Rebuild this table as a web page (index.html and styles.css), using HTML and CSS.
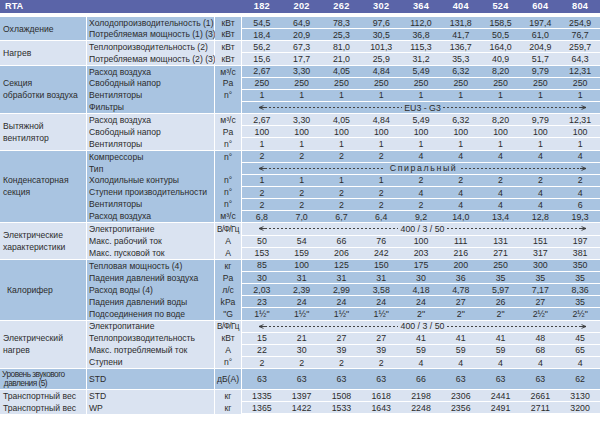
FILE: index.html
```html
<!DOCTYPE html>
<html lang="ru">
<head>
<meta charset="utf-8">
<title>RTA</title>
<link rel="stylesheet" href="styles.css">
</head>
<body>
<div class="sheet">
  <div class="head">
    <div class="ttl">RTA</div>
    <div class="hnums"><span>182</span><span>202</span><span>262</span><span>302</span><span>364</span><span>404</span><span>524</span><span>604</span><span>804</span></div>
  </div>

  <div class="sec med">
    <div class="grp">Охлаждение</div>
    <div class="params"><div>Холодопроизводительность (1)</div><div>Потребляемая мощность (1) (3)</div></div>
    <div class="units"><div>кВт</div><div>кВт</div></div>
    <div class="vals">
      <div class="vrow"><span>54,5</span><span>64,9</span><span>78,3</span><span>97,6</span><span>112,0</span><span>131,8</span><span>158,5</span><span>197,4</span><span>254,9</span></div>
      <div class="vrow"><span>18,4</span><span>20,9</span><span>25,3</span><span>30,5</span><span>36,8</span><span>41,7</span><span>50,5</span><span>61,0</span><span>76,7</span></div>
    </div>
  </div>

  <div class="sec light">
    <div class="grp">Нагрев</div>
    <div class="params"><div>Теплопроизводительность (2)</div><div>Потребляемая мощность (2) (3)</div></div>
    <div class="units"><div>кВт</div><div>кВт</div></div>
    <div class="vals">
      <div class="vrow"><span>56,2</span><span>67,3</span><span>81,0</span><span>101,3</span><span>115,3</span><span>136,7</span><span>164,0</span><span>204,9</span><span>259,7</span></div>
      <div class="vrow"><span>15,6</span><span>17,7</span><span>21,0</span><span>25,9</span><span>31,2</span><span>35,3</span><span>40,9</span><span>51,7</span><span>64,3</span></div>
    </div>
  </div>

  <div class="sec med">
    <div class="grp">Секция<br>обработки воздуха</div>
    <div class="params"><div>Расход воздуха</div><div>Свободный напор</div><div>Вентиляторы</div><div>Фильтры</div></div>
    <div class="units"><div>м³/с</div><div>Pa</div><div>n°</div><div></div></div>
    <div class="vals">
      <div class="vrow"><span>2,67</span><span>3,30</span><span>4,05</span><span>4,84</span><span>5,49</span><span>6,32</span><span>8,20</span><span>9,79</span><span>12,31</span></div>
      <div class="vrow"><span>250</span><span>250</span><span>250</span><span>250</span><span>250</span><span>250</span><span>250</span><span>250</span><span>250</span></div>
      <div class="vrow"><span>1</span><span>1</span><span>1</span><span>1</span><span>1</span><span>1</span><span>1</span><span>1</span><span>1</span></div>
      <div class="vrow arrow">
        <svg class="ah" width="7" height="5" viewBox="0 0 7 5"><path d="M5.5 0.6 L1 2.5 L5.5 4.4 M1 2.5 H7"/></svg>
        <i class="dash"></i><b class="mid">EU3 - G3</b><i class="dash"></i>
        <svg class="ah" width="7" height="5" viewBox="0 0 7 5"><path d="M1.5 0.6 L6 2.5 L1.5 4.4 M0 2.5 H6"/></svg>
      </div>
    </div>
  </div>

  <div class="sec light">
    <div class="grp">Вытяжной<br>вентилятор</div>
    <div class="params"><div>Расход воздуха</div><div>Свободный напор</div><div>Вентиляторы</div></div>
    <div class="units"><div>м³/с</div><div>Pa</div><div>n°</div></div>
    <div class="vals">
      <div class="vrow"><span>2,67</span><span>3,30</span><span>4,05</span><span>4,84</span><span>5,49</span><span>6,32</span><span>8,20</span><span>9,79</span><span>12,31</span></div>
      <div class="vrow"><span>100</span><span>100</span><span>100</span><span>100</span><span>100</span><span>100</span><span>100</span><span>100</span><span>100</span></div>
      <div class="vrow"><span>1</span><span>1</span><span>1</span><span>1</span><span>1</span><span>1</span><span>1</span><span>1</span><span>1</span></div>
    </div>
  </div>

  <div class="sec med">
    <div class="grp">Конденсаторная<br>секция</div>
    <div class="params"><div>Компрессоры</div><div>Тип</div><div>Холодильные контуры</div><div>Ступени производительности</div><div>Вентиляторы</div><div>Расход воздуха</div></div>
    <div class="units"><div>n°</div><div></div><div>n°</div><div>n°</div><div>n°</div><div>м³/с</div></div>
    <div class="vals">
      <div class="vrow"><span>2</span><span>2</span><span>2</span><span>2</span><span>4</span><span>4</span><span>4</span><span>4</span><span>4</span></div>
      <div class="vrow arrow">
        <svg class="ah" width="7" height="5" viewBox="0 0 7 5"><path d="M5.5 0.6 L1 2.5 L5.5 4.4 M1 2.5 H7"/></svg>
        <i class="dash"></i><b class="mid spaced">Спиральный</b><i class="dash"></i>
        <svg class="ah" width="7" height="5" viewBox="0 0 7 5"><path d="M1.5 0.6 L6 2.5 L1.5 4.4 M0 2.5 H6"/></svg>
      </div>
      <div class="vrow"><span>1</span><span>1</span><span>1</span><span>1</span><span>2</span><span>2</span><span>2</span><span>2</span><span>2</span></div>
      <div class="vrow"><span>2</span><span>2</span><span>2</span><span>2</span><span>4</span><span>4</span><span>4</span><span>4</span><span>4</span></div>
      <div class="vrow"><span>2</span><span>2</span><span>2</span><span>2</span><span>2</span><span>4</span><span>4</span><span>4</span><span>6</span></div>
      <div class="vrow"><span>6,8</span><span>7,0</span><span>6,7</span><span>6,4</span><span>9,2</span><span>14,0</span><span>13,4</span><span>12,8</span><span>19,3</span></div>
    </div>
  </div>

  <div class="sec light">
    <div class="grp">Электрические<br>характеристики</div>
    <div class="params"><div>Электропитание</div><div>Макс. рабочий ток</div><div>Макс. пусковой ток</div></div>
    <div class="units"><div class="tight">В/Ф/Гц</div><div>A</div><div>A</div></div>
    <div class="vals">
      <div class="vrow arrow">
        <svg class="ah" width="7" height="5" viewBox="0 0 7 5"><path d="M5.5 0.6 L1 2.5 L5.5 4.4 M1 2.5 H7"/></svg>
        <i class="dash"></i><b class="mid">400 / 3 / 50</b><i class="dash"></i>
        <svg class="ah" width="7" height="5" viewBox="0 0 7 5"><path d="M1.5 0.6 L6 2.5 L1.5 4.4 M0 2.5 H6"/></svg>
      </div>
      <div class="vrow"><span>50</span><span>54</span><span>66</span><span>76</span><span>100</span><span>111</span><span>131</span><span>151</span><span>197</span></div>
      <div class="vrow"><span>153</span><span>159</span><span>206</span><span>242</span><span>203</span><span>216</span><span>271</span><span>317</span><span>381</span></div>
    </div>
  </div>

  <div class="sec med">
    <div class="grp indent">Калорифер</div>
    <div class="params"><div>Тепловая мощность (4)</div><div>Падения давлений воздуха</div><div>Расход воды (4)</div><div>Падения давлений воды</div><div>Подсоединения по воде</div></div>
    <div class="units"><div>кг</div><div>Pa</div><div>л/с</div><div>kPa</div><div>"G</div></div>
    <div class="vals">
      <div class="vrow"><span>85</span><span>100</span><span>125</span><span>150</span><span>175</span><span>200</span><span>250</span><span>300</span><span>350</span></div>
      <div class="vrow"><span>30</span><span>31</span><span>31</span><span>31</span><span>30</span><span>36</span><span>35</span><span>35</span><span>35</span></div>
      <div class="vrow"><span>2,03</span><span>2,39</span><span>2,99</span><span>3,58</span><span>4,18</span><span>4,78</span><span>5,97</span><span>7,17</span><span>8,36</span></div>
      <div class="vrow"><span>23</span><span>24</span><span>24</span><span>24</span><span>24</span><span>27</span><span>26</span><span>27</span><span>35</span></div>
      <div class="vrow"><span>1½"</span><span>1½"</span><span>1½"</span><span>1½"</span><span>2"</span><span>2"</span><span>2"</span><span>2½"</span><span>2½"</span></div>
    </div>
  </div>

  <div class="sec light">
    <div class="grp">Электрический<br>нагрев</div>
    <div class="params"><div>Электропитание</div><div>Теплопроизводительность</div><div>Макс. потребляемый ток</div><div>Ступени</div></div>
    <div class="units"><div class="tight">В/Ф/Гц</div><div>кВт</div><div>A</div><div>n°</div></div>
    <div class="vals">
      <div class="vrow arrow">
        <svg class="ah" width="7" height="5" viewBox="0 0 7 5"><path d="M5.5 0.6 L1 2.5 L5.5 4.4 M1 2.5 H7"/></svg>
        <i class="dash"></i><b class="mid">400 / 3 / 50</b><i class="dash"></i>
        <svg class="ah" width="7" height="5" viewBox="0 0 7 5"><path d="M1.5 0.6 L6 2.5 L1.5 4.4 M0 2.5 H6"/></svg>
      </div>
      <div class="vrow"><span>15</span><span>21</span><span>27</span><span>27</span><span>41</span><span>41</span><span>41</span><span>48</span><span>45</span></div>
      <div class="vrow"><span>22</span><span>30</span><span>39</span><span>39</span><span>59</span><span>59</span><span>59</span><span>68</span><span>65</span></div>
      <div class="vrow"><span>2</span><span>2</span><span>2</span><span>2</span><span>4</span><span>4</span><span>4</span><span>4</span><span>4</span></div>
    </div>
  </div>

  <div class="sec med sound">
    <div class="grp small">Уровень звукового<br>&nbsp;давления (5)</div>
    <div class="params"><div>STD</div></div>
    <div class="units"><div>дБ(А)</div></div>
    <div class="vals">
      <div class="vrow"><span>63</span><span>63</span><span>63</span><span>63</span><span>66</span><span>63</span><span>63</span><span>63</span><span>62</span></div>
    </div>
  </div>

  <div class="sec light last">
    <div class="grp stack"><div>Транспортный вес</div><div>Транспортный вес</div></div>
    <div class="params"><div>STD</div><div>WP</div></div>
    <div class="units"><div>кг</div><div>кг</div></div>
    <div class="vals">
      <div class="vrow"><span>1335</span><span>1397</span><span>1508</span><span>1618</span><span>2198</span><span>2306</span><span>2441</span><span>2661</span><span>3130</span></div>
      <div class="vrow"><span>1365</span><span>1422</span><span>1533</span><span>1643</span><span>2248</span><span>2356</span><span>2491</span><span>2711</span><span>3200</span></div>
    </div>
  </div>
</div>
</body>
</html>
```

FILE: styles.css
```css
:root {
  --rh: 12.15px;
  --med: #a9c4e1;
  --light: #dae3f1;
  --head: #5a64a8;
  --ink: #2c2c2c;
}

* { box-sizing: border-box; }

html, body {
  margin: 0;
  padding: 0;
  background: #fff;
}

body {
  font-family: "Liberation Sans", Arial, sans-serif;
  font-size: 8.6px;
  color: var(--ink);
}

.sheet {
  width: 600px;
  display: flex;
  flex-direction: column;
}

.head {
  display: grid;
  grid-template-columns: 242px 1fr;
  height: 13px;
  background: var(--head);
  color: #fff;
  font-weight: bold;
  font-size: 9.2px;
  margin-bottom: 4px;
}

.ttl {
  padding-left: 5px;
  line-height: 13px;
}

.hnums {
  display: grid;
  grid-template-columns: repeat(9, 1fr);
  line-height: 13px;
  text-align: center;
  letter-spacing: 0.3px;
}

.sec {
  display: grid;
  grid-template-columns: 86px 127px 26px 1fr;
  column-gap: 1px;
  background: #fff;
}

.sec.med > .grp,
.sec.med > .params,
.sec.med > .units,
.sec.med .vrow { background: var(--med); }

.sec.light > .grp,
.sec.light > .params,
.sec.light > .units,
.sec.light .vrow { background: var(--light); }

.grp,
.params,
.units {
  border-bottom: 1px solid #fff;
}

.grp {
  display: flex;
  align-items: center;
  padding-left: 3px;
  line-height: 12px;
  white-space: nowrap;
}

.grp.indent { padding-left: 7px; }

.grp.small {
  font-size: 8.3px;
  line-height: 9px;
  letter-spacing: -0.5px;
  padding-left: 2px;
}

.grp.stack {
  flex-direction: column;
  align-items: stretch;
}

.grp.stack > div {
  flex: 1;
  display: flex;
  align-items: center;
}

.params,
.units {
  display: flex;
  flex-direction: column;
}

.params > div,
.units > div {
  flex: 1;
  display: flex;
  align-items: center;
  white-space: nowrap;
}

.params > div { padding-left: 2px; }

.units > div { justify-content: center; }

.units > .tight { letter-spacing: -0.6px; font-size: 8.2px; }

.vrow {
  height: var(--rh);
  border-bottom: 1px solid #fff;
  display: grid;
  grid-template-columns: repeat(9, 1fr);
  align-items: center;
  text-align: center;
  font-size: 8.8px;
  white-space: nowrap;
}

.sound .vrow { height: 21px; }

.last .grp,
.last .params,
.last .units { border-bottom: 0; }

.vrow.arrow {
  display: flex;
  align-items: center;
  padding: 0 13px 0 16px;
}

.ah {
  flex: none;
  fill: none;
  stroke: #333;
  stroke-width: 0.9;
}

.dash {
  flex: 1;
  height: 1px;
  background: repeating-linear-gradient(to right, #444 0 2.5px, transparent 2.5px 4px);
}

.mid {
  font-weight: normal;
  padding: 0 2px;
}

.mid.spaced {
  letter-spacing: 1.6px;
  padding: 0 4px 0 6px;
}
```
